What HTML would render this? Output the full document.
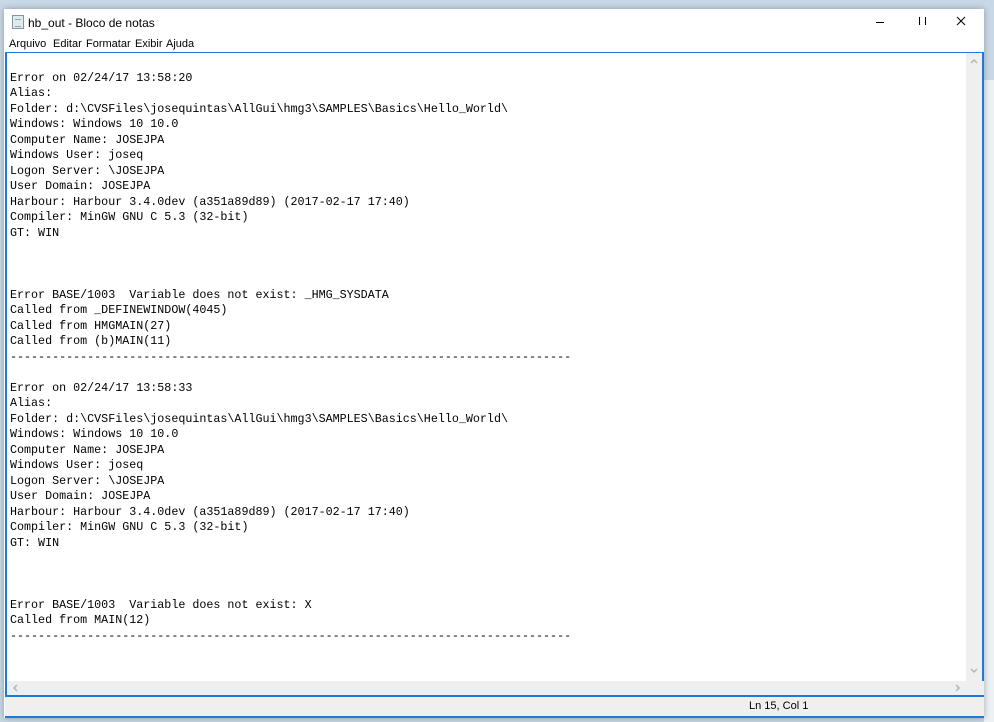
<!DOCTYPE html>
<html><head><meta charset="utf-8"><style>
*{margin:0;padding:0;box-sizing:border-box}
body{width:994px;height:722px;background:#c9d8e6;position:relative;overflow:hidden;font-family:"Liberation Sans",sans-serif}
.rb{position:absolute;left:984px;top:0;width:10px;height:722px;background:#c9d8e6}
.rb2{position:absolute;left:984px;top:80px;width:10px;height:642px;background:#eef1f4}
.win{position:absolute;left:4px;top:9px;width:980px;height:709px;background:#fff;box-shadow:0 0 6px rgba(0,0,0,.3)}
.title{position:absolute;left:0;top:0;width:980px;height:27px;background:#fff;font-size:12px;color:#000}
.title .t{position:absolute;left:24px;top:7px}
.icon{position:absolute;left:8px;top:6px;width:12px;height:14px;background:#dfe9ef;border:1px solid #7f98a8}
.icon:after{content:"";position:absolute;left:2px;top:3px;width:6px;height:6px;border-top:1px solid #8aa;border-bottom:1px solid #8aa}
.menu{position:absolute;left:0;top:27px;height:16px;font-size:11px;color:#000}
.menu span{position:absolute;top:2px;white-space:nowrap}
.edit{position:absolute;left:1px;top:43px;width:979px;height:666px;border:2px solid #1e7ad6;border-top-width:1px;background:#fff}
pre{position:absolute;left:3px;top:2px;font-family:"Liberation Mono",monospace;font-size:11.7px;line-height:15.5px;color:#000}
.vs{position:absolute;right:0;top:0;width:16px;height:628px;background:#efefef}
.hs{position:absolute;left:0;top:628px;width:961px;height:14px;background:#efefef}
.corner{position:absolute;left:961px;top:628px;width:16px;height:14px;background:#efefef}
.status{position:absolute;left:1px;top:686px;width:979px;height:23px;background:#efefef;border-top:2px solid #1e7ad6;border-bottom:2px solid #1e7ad6;font-size:11px}
.status span{position:absolute;left:744px;top:3px}
</style></head><body>
<div class="rb"></div><div class="rb2"></div>
<div class="win">
<div class="title"><div class="icon"></div><span class="t">hb_out - Bloco de notas</span>
<svg style="position:absolute;left:872px;top:12px" width="10" height="3"><rect width="8" height="1" y="1" fill="#000"/></svg>
<svg style="position:absolute;left:914px;top:8px" width="10" height="10"><rect x="1" width="1" height="8" fill="#000"/><rect x="7" width="1" height="8" fill="#000"/></svg>
<svg style="position:absolute;left:952px;top:7px" width="10" height="10"><path d="M1 1L9 9M9 1L1 9" stroke="#000" stroke-width="1"/></svg>
</div>
<div class="menu"><span style="left:5px">Arquivo</span><span style="left:49px">Editar</span><span style="left:82px">Formatar</span><span style="left:131px">Exibir</span><span style="left:162px">Ajuda</span></div>
<div class="edit">
<pre>

Error on 02/24/17 13:58:20
Alias: 
Folder: d:\CVSFiles\josequintas\AllGui\hmg3\SAMPLES\Basics\Hello_World\
Windows: Windows 10 10.0
Computer Name: JOSEJPA
Windows User: joseq
Logon Server: \JOSEJPA
User Domain: JOSEJPA
Harbour: Harbour 3.4.0dev (a351a89d89) (2017-02-17 17:40)
Compiler: MinGW GNU C 5.3 (32-bit)
GT: WIN



Error BASE/1003  Variable does not exist: _HMG_SYSDATA
Called from _DEFINEWINDOW(4045)
Called from HMGMAIN(27)
Called from (b)MAIN(11)
--------------------------------------------------------------------------------

Error on 02/24/17 13:58:33
Alias: 
Folder: d:\CVSFiles\josequintas\AllGui\hmg3\SAMPLES\Basics\Hello_World\
Windows: Windows 10 10.0
Computer Name: JOSEJPA
Windows User: joseq
Logon Server: \JOSEJPA
User Domain: JOSEJPA
Harbour: Harbour 3.4.0dev (a351a89d89) (2017-02-17 17:40)
Compiler: MinGW GNU C 5.3 (32-bit)
GT: WIN



Error BASE/1003  Variable does not exist: X
Called from MAIN(12)
--------------------------------------------------------------------------------
</pre>
<div class="vs">
<svg style="position:absolute;left:4px;top:5px" width="8" height="6"><path d="M1 5L4 2L7 5" stroke="#b5b5b5" stroke-width="1.5" fill="none"/></svg>
<svg style="position:absolute;left:4px;top:615px" width="8" height="6"><path d="M1 1L4 4L7 1" stroke="#b5b5b5" stroke-width="1.5" fill="none"/></svg>
</div>
<div class="hs">
<svg style="position:absolute;left:5px;top:3px" width="6" height="8"><path d="M5 1L2 4L5 7" stroke="#b5b5b5" stroke-width="1.5" fill="none"/></svg>
<svg style="position:absolute;left:948px;top:3px" width="6" height="8"><path d="M1 1L4 4L1 7" stroke="#b5b5b5" stroke-width="1.5" fill="none"/></svg>
</div>
<div class="corner"></div>
</div>
<div class="status"><span>Ln 15, Col 1</span></div>
</div>
</body></html>
